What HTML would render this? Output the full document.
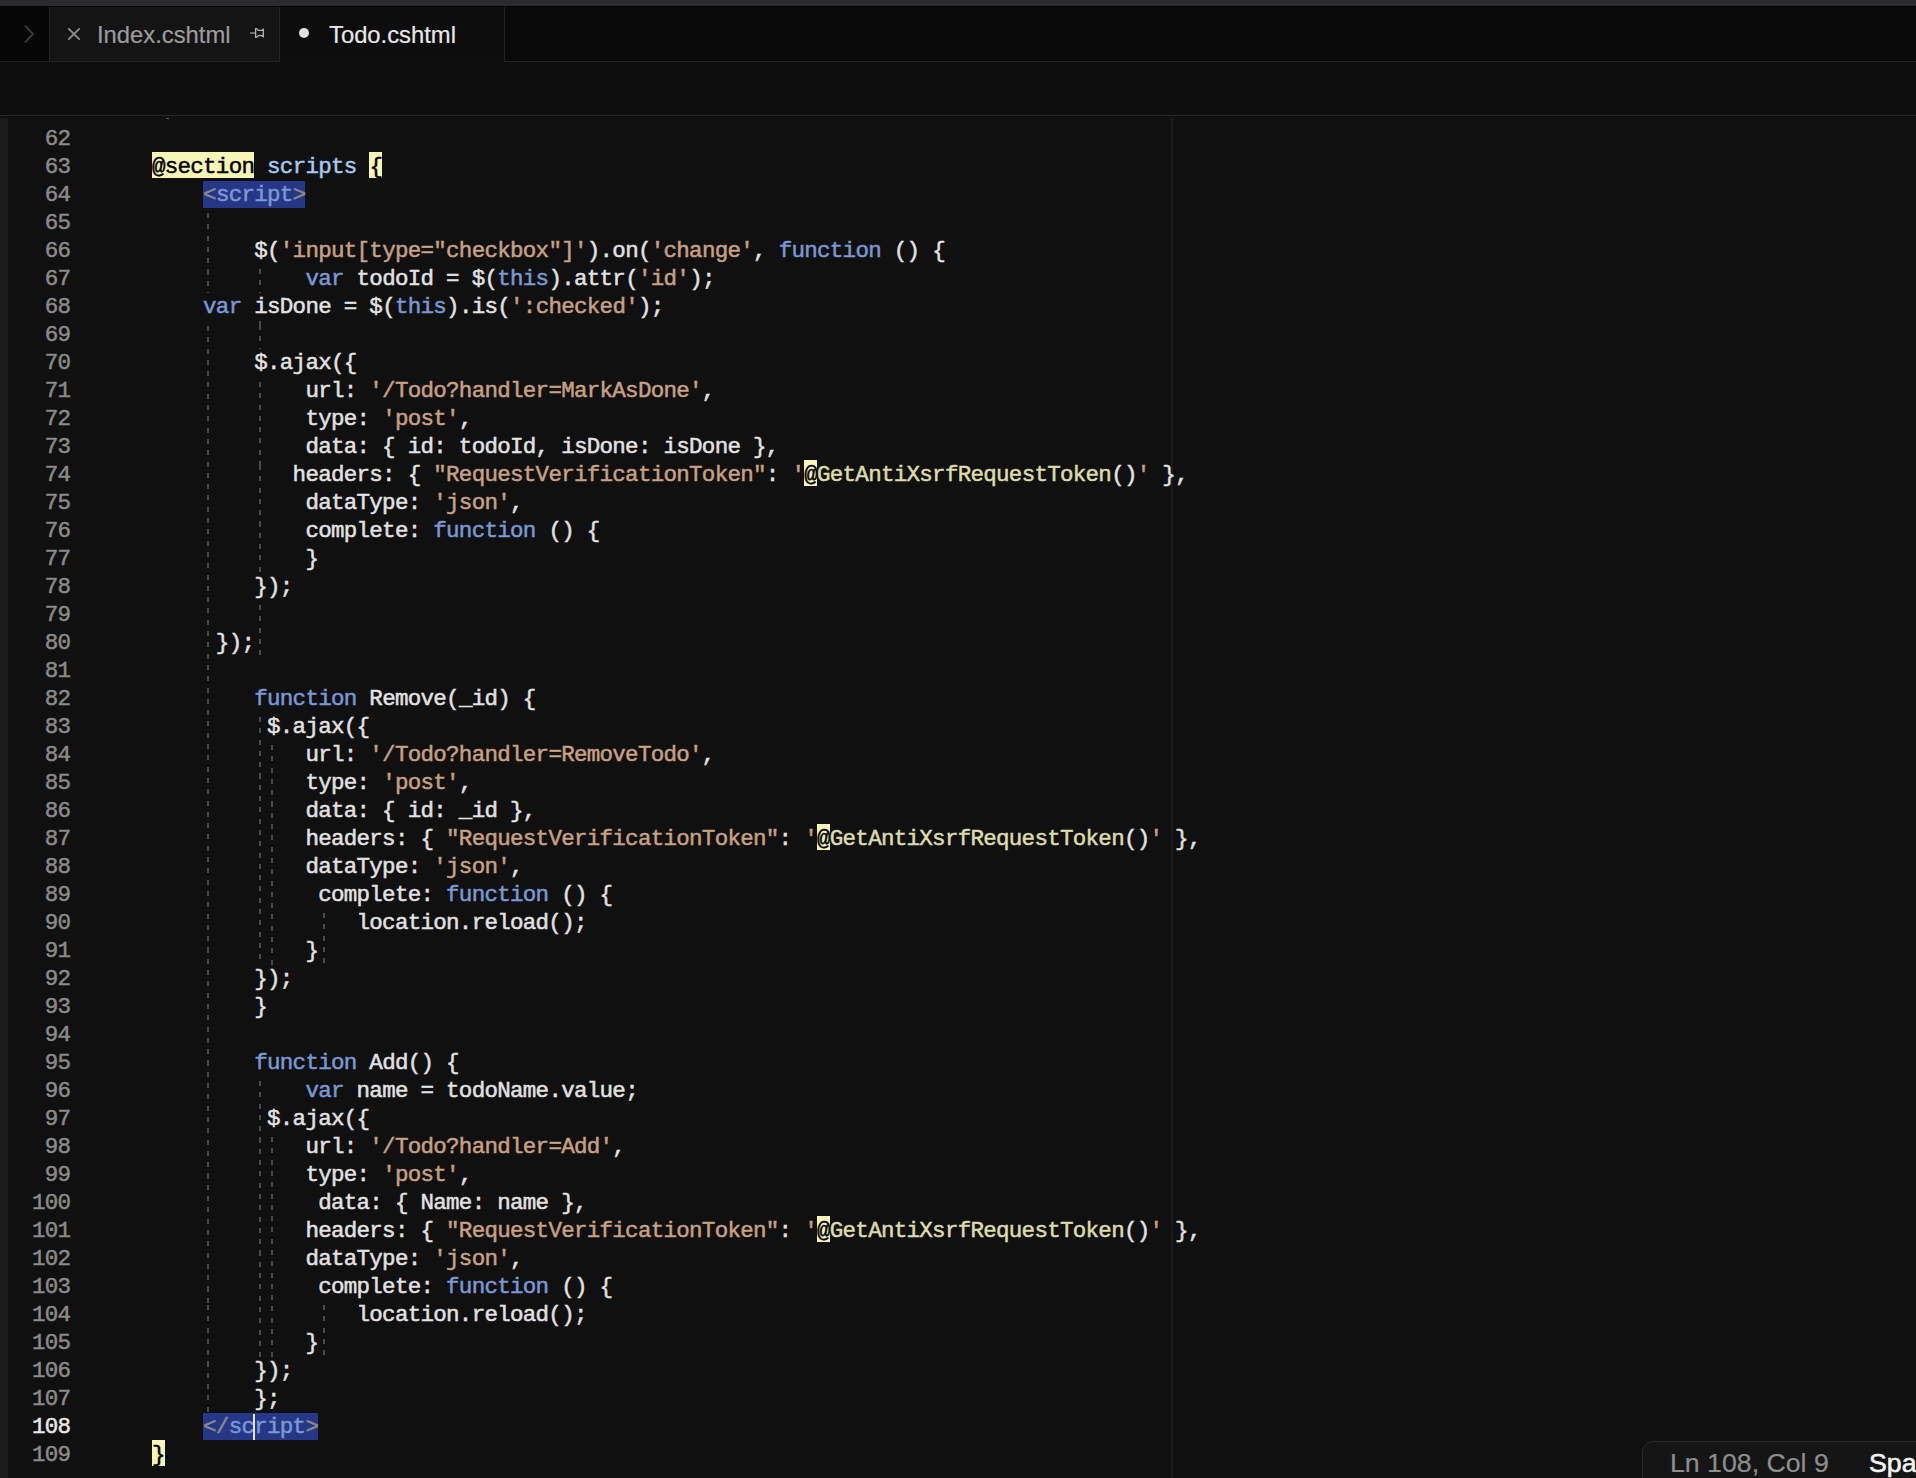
<!DOCTYPE html>
<html><head><meta charset="utf-8"><style>
html,body{margin:0;padding:0}
body{width:1916px;height:1478px;overflow:hidden;background:#101010;position:relative;font-family:"Liberation Sans",sans-serif}
.topstrip{position:absolute;left:0;top:0;width:1916px;height:6px;background:#2b2b2e}
.tabbar{position:absolute;left:0;top:6px;width:1916px;height:55px;background:#090909;border-bottom:1px solid #222}
.chev{position:absolute;left:0;top:6px;width:49px;height:55px;background:#060606}
.tab1{position:absolute;left:49px;top:6px;width:229px;height:55px;background:#141414;border-left:1px solid #262626;border-right:1px solid #262626;border-bottom:1px solid #222}
.tab2{position:absolute;left:280px;top:6px;width:224px;height:56px;background:#0d0d0d;border-right:1px solid #222}
.tabtxt{position:absolute;top:1px;height:55px;line-height:55px;font-size:23.8px;white-space:pre;-webkit-text-stroke-width:0.2px}
.navbar{position:absolute;left:0;top:62px;width:1916px;height:53px;background:#0e0e0e;border-bottom:1px solid #262626}
.edge{position:absolute;left:0;top:118px;width:8px;height:1360px;background:#1c1c1c}
.ruler{position:absolute;left:1171px;top:118px;width:2px;height:1360px;background:#1a1a1a}
.ln{position:absolute;left:0;width:70.25px;text-align:right;font-family:"Liberation Mono",monospace;font-size:22.5px;letter-spacing:-0.713px;line-height:28px;height:28px;color:#8a8a8a;-webkit-text-stroke-width:0.5px}
.ln.act{color:#e8e8e8}
.cl{position:absolute;left:100.75px;font-family:"Liberation Mono",monospace;font-size:22.5px;letter-spacing:-0.713px;line-height:28px;height:28px;white-space:pre;color:#e2e2e2;-webkit-text-stroke-width:0.5px}
.k{color:#7b98d4} .s{color:#c8a083} .f{color:#dcdcaa} .v{color:#a6c8ee}
.hl,.hlb,.hlat{color:#000}
.selt{color:#8a8a8a} .selk{color:#7b98d4}
.selbox{position:absolute;height:27.4px;background:#263787}
.hlbox{position:absolute;height:25.5px;background:#f7f6b6}
.g{position:absolute;width:2px;background:repeating-linear-gradient(to bottom,#4a4a4a 0,#4a4a4a 5px,transparent 5px,transparent 11.3px)}
.cur{position:absolute;width:1.6px;height:26px;background:#e6e6e6}
.pill{position:absolute;left:1642px;top:1441px;width:300px;height:50px;background:#151515;border:1px solid #2a2a2a;border-radius:11px}
.st{position:absolute;top:1448px;font-size:26.7px;line-height:30px;white-space:pre;-webkit-text-stroke-width:0.2px}
</style></head><body>
<div class="tabbar"></div>
<div class="topstrip"></div>
<div style="position:absolute;left:0;top:6px;width:1916px;height:1px;background:#030303;z-index:2"></div>
<div class="chev"></div>
<svg style="position:absolute;left:22px;top:22px" width="16" height="24" viewBox="0 0 16 24"><path d="M3 3.5 L11 12 L3 20.5" stroke="#383838" stroke-width="2" fill="none"/></svg>
<div class="tab1">
 <svg style="position:absolute;left:17px;top:21px" width="14" height="14" viewBox="0 0 14 14"><path d="M1.3 1.3 L12.7 12.7 M12.7 1.3 L1.3 12.7" stroke="#8e8e8e" stroke-width="1.9" fill="none"/></svg>
 <div class="tabtxt" style="left:47px;color:#9c9c9c">Index.cshtml</div>
 <svg style="position:absolute;left:196px;top:18px" width="24" height="18" viewBox="0 0 24 18"><path d="M4 9 H9" stroke="#7c7c7c" stroke-width="1.7" fill="none"/><path d="M9.6 4.2 V13.8 M9.6 4.3 Q11 4.6 12.4 6.4 H16.3 Q16.8 5.4 17.3 5.1 V12.9 Q16.8 12.6 16.3 11.6 H12.4 Q11 13.4 9.6 13.7" stroke="#b4b4b4" stroke-width="1.3" fill="none" stroke-linejoin="round"/></svg>
</div>
<div class="tab2">
 <div style="position:absolute;left:18.8px;top:21.8px;width:10.5px;height:10.5px;border-radius:50%;background:#e2e2e2"></div>
 <div class="tabtxt" style="left:49px;color:#e8e8e8">Todo.cshtml</div>
</div>
<div class="navbar"></div>
<div class="edge"></div>
<div class="ruler"></div>
<div style="position:absolute;left:166px;top:117.5px;width:3px;height:1.5px;background:#5a5a5a"></div>
<div class="ln" style="top:125px">62</div>
<div class="ln" style="top:153px">63</div>
<div class="ln" style="top:181px">64</div>
<div class="ln" style="top:209px">65</div>
<div class="ln" style="top:237px">66</div>
<div class="ln" style="top:265px">67</div>
<div class="ln" style="top:293px">68</div>
<div class="ln" style="top:321px">69</div>
<div class="ln" style="top:349px">70</div>
<div class="ln" style="top:377px">71</div>
<div class="ln" style="top:405px">72</div>
<div class="ln" style="top:433px">73</div>
<div class="ln" style="top:461px">74</div>
<div class="ln" style="top:489px">75</div>
<div class="ln" style="top:517px">76</div>
<div class="ln" style="top:545px">77</div>
<div class="ln" style="top:573px">78</div>
<div class="ln" style="top:601px">79</div>
<div class="ln" style="top:629px">80</div>
<div class="ln" style="top:657px">81</div>
<div class="ln" style="top:685px">82</div>
<div class="ln" style="top:713px">83</div>
<div class="ln" style="top:741px">84</div>
<div class="ln" style="top:769px">85</div>
<div class="ln" style="top:797px">86</div>
<div class="ln" style="top:825px">87</div>
<div class="ln" style="top:853px">88</div>
<div class="ln" style="top:881px">89</div>
<div class="ln" style="top:909px">90</div>
<div class="ln" style="top:937px">91</div>
<div class="ln" style="top:965px">92</div>
<div class="ln" style="top:993px">93</div>
<div class="ln" style="top:1021px">94</div>
<div class="ln" style="top:1049px">95</div>
<div class="ln" style="top:1077px">96</div>
<div class="ln" style="top:1105px">97</div>
<div class="ln" style="top:1133px">98</div>
<div class="ln" style="top:1161px">99</div>
<div class="ln" style="top:1189px">100</div>
<div class="ln" style="top:1217px">101</div>
<div class="ln" style="top:1245px">102</div>
<div class="ln" style="top:1273px">103</div>
<div class="ln" style="top:1301px">104</div>
<div class="ln" style="top:1329px">105</div>
<div class="ln" style="top:1357px">106</div>
<div class="ln" style="top:1385px">107</div>
<div class="ln act" style="top:1413px">108</div>
<div class="ln" style="top:1441px">109</div>
<div class="g" style="left:207px;top:213px;height:80px;background-position:0 0px"></div>
<div class="g" style="left:207px;top:321px;height:1092px;background-position:0 -108px"></div>
<div class="g" style="left:259px;top:269px;height:24px;background-position:0 0px"></div>
<div class="g" style="left:259px;top:321px;height:28px;background-position:0 -52px"></div>
<div class="g" style="left:259px;top:377px;height:196px;background-position:0 -108px"></div>
<div class="g" style="left:259px;top:601px;height:56px;background-position:0 -332px"></div>
<div class="g" style="left:259px;top:717px;height:248px;background-position:0 0px"></div>
<div class="g" style="left:271px;top:745px;height:220px;background-position:0 0px"></div>
<div class="g" style="left:323px;top:913px;height:52px;background-position:0 0px"></div>
<div class="g" style="left:259px;top:1081px;height:276px;background-position:0 0px"></div>
<div class="g" style="left:271px;top:1137px;height:220px;background-position:0 0px"></div>
<div class="g" style="left:323px;top:1305px;height:52px;background-position:0 0px"></div>
<div class="selbox" style="left:203.05px;top:181px;width:102.30px"></div>
<div class="selbox" style="left:203.05px;top:1413px;width:115.08px"></div>
<div class="hlbox" style="left:151.90px;top:152px;width:102.30px"></div>
<div class="hlbox" style="left:369.28px;top:152px;width:12.79px"></div>
<div class="hlbox" style="left:804.04px;top:460px;width:12.79px"></div>
<div class="hlbox" style="left:816.82px;top:824px;width:12.79px"></div>
<div class="hlbox" style="left:816.82px;top:1216px;width:12.79px"></div>
<div class="hlbox" style="left:151.90px;top:1440px;width:12.79px"></div>
<div class="cl" style="top:125px"></div>
<div class="cl" style="top:153px">    <span class="hl">@section</span> <span class="v">scripts</span> <span class="hlb">{</span></div>
<div class="cl" style="top:181px">        <span class="selt">&lt;</span><span class="selk">script</span><span class="selt">&gt;</span></div>
<div class="cl" style="top:209px"></div>
<div class="cl" style="top:237px">            $(<span class="s">&#x27;input[type=&quot;checkbox&quot;]&#x27;</span>).on(<span class="s">&#x27;change&#x27;</span>, <span class="k">function</span> () {</div>
<div class="cl" style="top:265px">                <span class="k">var</span> todoId = $(<span class="k">this</span>).attr(<span class="s">&#x27;id&#x27;</span>);</div>
<div class="cl" style="top:293px">        <span class="k">var</span> isDone = $(<span class="k">this</span>).is(<span class="s">&#x27;:checked&#x27;</span>);</div>
<div class="cl" style="top:321px"></div>
<div class="cl" style="top:349px">            $.ajax({</div>
<div class="cl" style="top:377px">                url: <span class="s">&#x27;/Todo?handler=MarkAsDone&#x27;</span>,</div>
<div class="cl" style="top:405px">                type: <span class="s">&#x27;post&#x27;</span>,</div>
<div class="cl" style="top:433px">                data: { id: todoId, isDone: isDone },</div>
<div class="cl" style="top:461px">               headers: { <span class="s">&quot;RequestVerificationToken&quot;</span>: <span class="s">&#x27;</span><span class="hlat">@</span><span class="f">GetAntiXsrfRequestToken</span>()<span class="s">&#x27;</span> },</div>
<div class="cl" style="top:489px">                dataType: <span class="s">&#x27;json&#x27;</span>,</div>
<div class="cl" style="top:517px">                complete: <span class="k">function</span> () {</div>
<div class="cl" style="top:545px">                }</div>
<div class="cl" style="top:573px">            });</div>
<div class="cl" style="top:601px"></div>
<div class="cl" style="top:629px">         });</div>
<div class="cl" style="top:657px"></div>
<div class="cl" style="top:685px">            <span class="k">function</span> Remove(_id) {</div>
<div class="cl" style="top:713px">             $.ajax({</div>
<div class="cl" style="top:741px">                url: <span class="s">&#x27;/Todo?handler=RemoveTodo&#x27;</span>,</div>
<div class="cl" style="top:769px">                type: <span class="s">&#x27;post&#x27;</span>,</div>
<div class="cl" style="top:797px">                data: { id: _id },</div>
<div class="cl" style="top:825px">                headers: { <span class="s">&quot;RequestVerificationToken&quot;</span>: <span class="s">&#x27;</span><span class="hlat">@</span><span class="f">GetAntiXsrfRequestToken</span>()<span class="s">&#x27;</span> },</div>
<div class="cl" style="top:853px">                dataType: <span class="s">&#x27;json&#x27;</span>,</div>
<div class="cl" style="top:881px">                 complete: <span class="k">function</span> () {</div>
<div class="cl" style="top:909px">                    location.reload();</div>
<div class="cl" style="top:937px">                }</div>
<div class="cl" style="top:965px">            });</div>
<div class="cl" style="top:993px">            }</div>
<div class="cl" style="top:1021px"></div>
<div class="cl" style="top:1049px">            <span class="k">function</span> Add() {</div>
<div class="cl" style="top:1077px">                <span class="k">var</span> name = todoName.value;</div>
<div class="cl" style="top:1105px">             $.ajax({</div>
<div class="cl" style="top:1133px">                url: <span class="s">&#x27;/Todo?handler=Add&#x27;</span>,</div>
<div class="cl" style="top:1161px">                type: <span class="s">&#x27;post&#x27;</span>,</div>
<div class="cl" style="top:1189px">                 data: { Name: name },</div>
<div class="cl" style="top:1217px">                headers: { <span class="s">&quot;RequestVerificationToken&quot;</span>: <span class="s">&#x27;</span><span class="hlat">@</span><span class="f">GetAntiXsrfRequestToken</span>()<span class="s">&#x27;</span> },</div>
<div class="cl" style="top:1245px">                dataType: <span class="s">&#x27;json&#x27;</span>,</div>
<div class="cl" style="top:1273px">                 complete: <span class="k">function</span> () {</div>
<div class="cl" style="top:1301px">                    location.reload();</div>
<div class="cl" style="top:1329px">                }</div>
<div class="cl" style="top:1357px">            });</div>
<div class="cl" style="top:1385px">            };</div>
<div class="cl" style="top:1413px">        <span class="selt">&lt;/</span><span class="selk">script</span><span class="selt">&gt;</span></div>
<div class="cl" style="top:1441px">    <span class="hlb">}</span></div>
<div class="cur" style="left:253.19px;top:1414px"></div>
<div class="pill"></div>
<div class="st" style="left:1670px;color:#8e8e8e">Ln 108, Col 9</div>
<div class="st" style="left:1869px;color:#f2f2f2;-webkit-text-stroke-width:0.6px">Spaces</div>
</body></html>
